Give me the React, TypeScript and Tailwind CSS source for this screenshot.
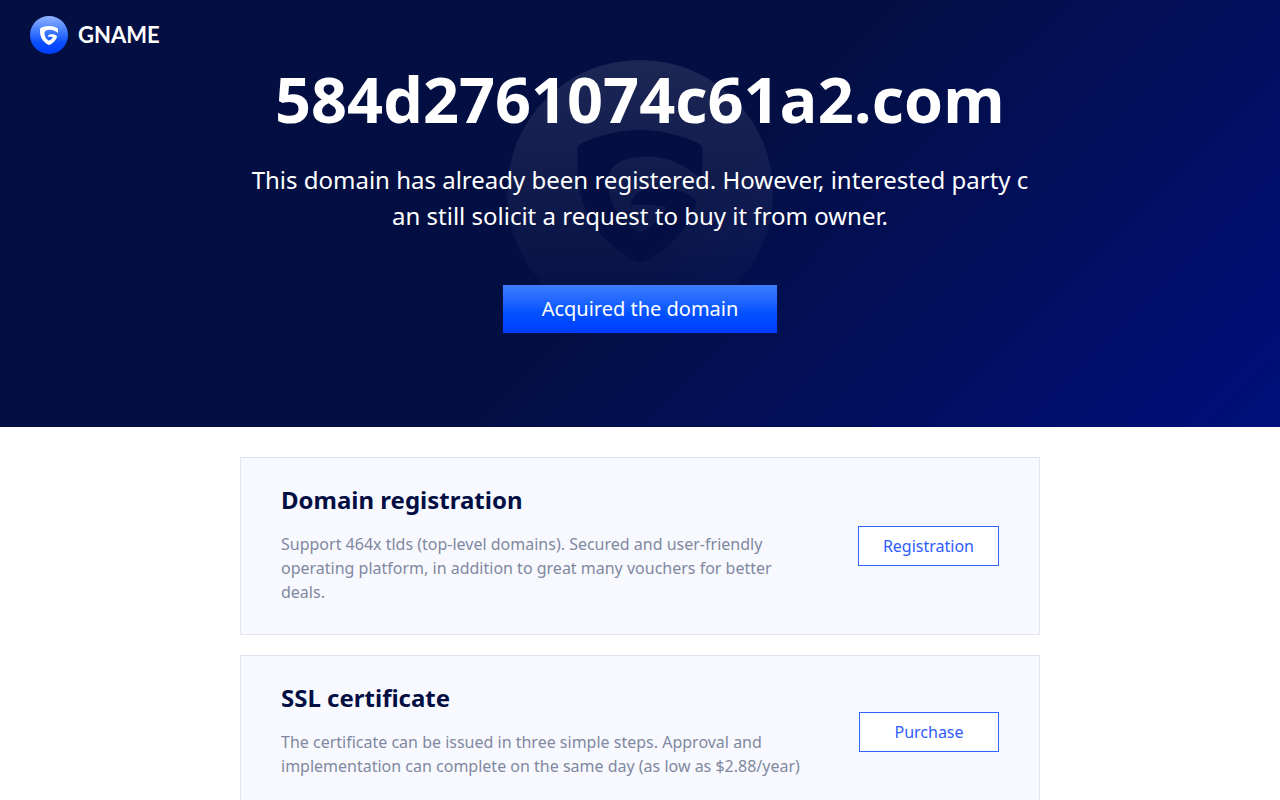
const LOGO_SHIELD =
  'M400 210 C470 210 530 230 575 250 Q588 256 588 270 V360 C545 322 490 291 430 291 C350 291 305 310 305 368 C305 440 345 490 400 520 C450 495 478 465 478 442 C455 435 420 434 372 436 C378 405 405 386 440 386 C480 384 525 384 570 424 C558 495 490 570 412 606 Q400 612 388 606 C270 545 212 440 212 330 V270 Q212 256 225 250 C270 230 330 210 400 210 Z';

function LogoMark() {
  return (
    <svg viewBox="0 0 800 800" className="size-[38px]" aria-hidden="true">
      <defs>
        <linearGradient id="logo-blue" x1="0" y1="0" x2="0" y2="1">
          <stop offset="0" stopColor="#8fb3ff" />
          <stop offset="0.7" stopColor="#0a50ff" />
          <stop offset="1" stopColor="#003cff" />
        </linearGradient>
      </defs>
      <circle cx="400" cy="400" r="400" fill="url(#logo-blue)" />
      <path d={LOGO_SHIELD} fill="#fff" />
    </svg>
  );
}

function Watermark() {
  return (
    <svg viewBox="0 0 800 800" className="pointer-events-none absolute top-[60px] left-1/2 size-[266px] -translate-x-1/2" aria-hidden="true">
      <defs>
        <linearGradient id="watermark-fade" x1="0" y1="0" x2="0" y2="1">
          <stop offset="0" stopColor="#fff" stopOpacity="0.1" />
          <stop offset="1" stopColor="#fff" stopOpacity="0" />
        </linearGradient>
      </defs>
      <path
        d={'M400 0 A400 400 0 1 0 400 800 A400 400 0 1 0 400 0 Z ' + LOGO_SHIELD}
        fillRule="evenodd"
        fill="url(#watermark-fade)"
      />
    </svg>
  );
}

const services = [
  {
    title: 'Domain registration',
    text: 'Support 464x tlds (top-level domains). Secured and user-friendly operating platform, in addition to great many vouchers for better deals.',
    action: 'Registration',
  },
  {
    title: 'SSL certificate',
    text: 'The certificate can be issued in three simple steps. Approval and implementation can complete on the same day (as low as $2.88/year)',
    action: 'Purchase',
  },
];

export default function App() {
  return (
    <div className="min-h-screen bg-white font-['Noto_Sans','Open_Sans',sans-serif]">
      <header className="relative bg-[linear-gradient(135deg,#030f43_0%,#030f43_52%,#000f7c_100%)] pb-[94px] text-white">
        <Watermark />
        <a href="#" className="absolute top-4 left-[30px] flex items-center gap-[10px]">
          <LogoMark />
          <span className="font-['Lato',sans-serif] text-[22px] leading-7 font-bold">GNAME</span>
        </a>
        <div className="relative mx-auto flex max-w-[800px] flex-col items-center pt-[60px] text-center">
          <h1 className="font-['Open_Sans',sans-serif] text-[63px] leading-[78px] font-bold">584d2761074c61a2.com</h1>
          <p className="mt-6 text-2xl leading-9 break-all">
            This domain has already been registered. However, interested party c
            <br />
            an still solicit a request to buy it from owner.
          </p>
          <button className="mt-[51px] h-12 bg-linear-to-b from-[#3c7dff] via-[#0050ff] via-60% to-[#003cff] px-[39px] text-xl">
            Acquired the domain
          </button>
        </div>
      </header>

      <main className="mx-auto flex max-w-[800px] flex-col gap-5 py-[30px]">
        {services.map((service) => (
          <section
            key={service.title}
            className="flex items-center justify-between border border-[#e1e4ef] bg-[#f8f9ff] px-10 py-[30px]"
          >
            <div className="max-w-[536px]">
              <h2 className="text-2xl leading-6 font-bold text-[#030f43]">{service.title}</h2>
              <p className="mt-5 text-base leading-6 text-[#8088a0]">{service.text}</p>
            </div>
            <button className="h-10 min-w-[140px] border border-[#2e66ff] bg-white px-6 text-base text-[#2e5cff]">
              {service.action}
            </button>
          </section>
        ))}
      </main>
    </div>
  );
}
